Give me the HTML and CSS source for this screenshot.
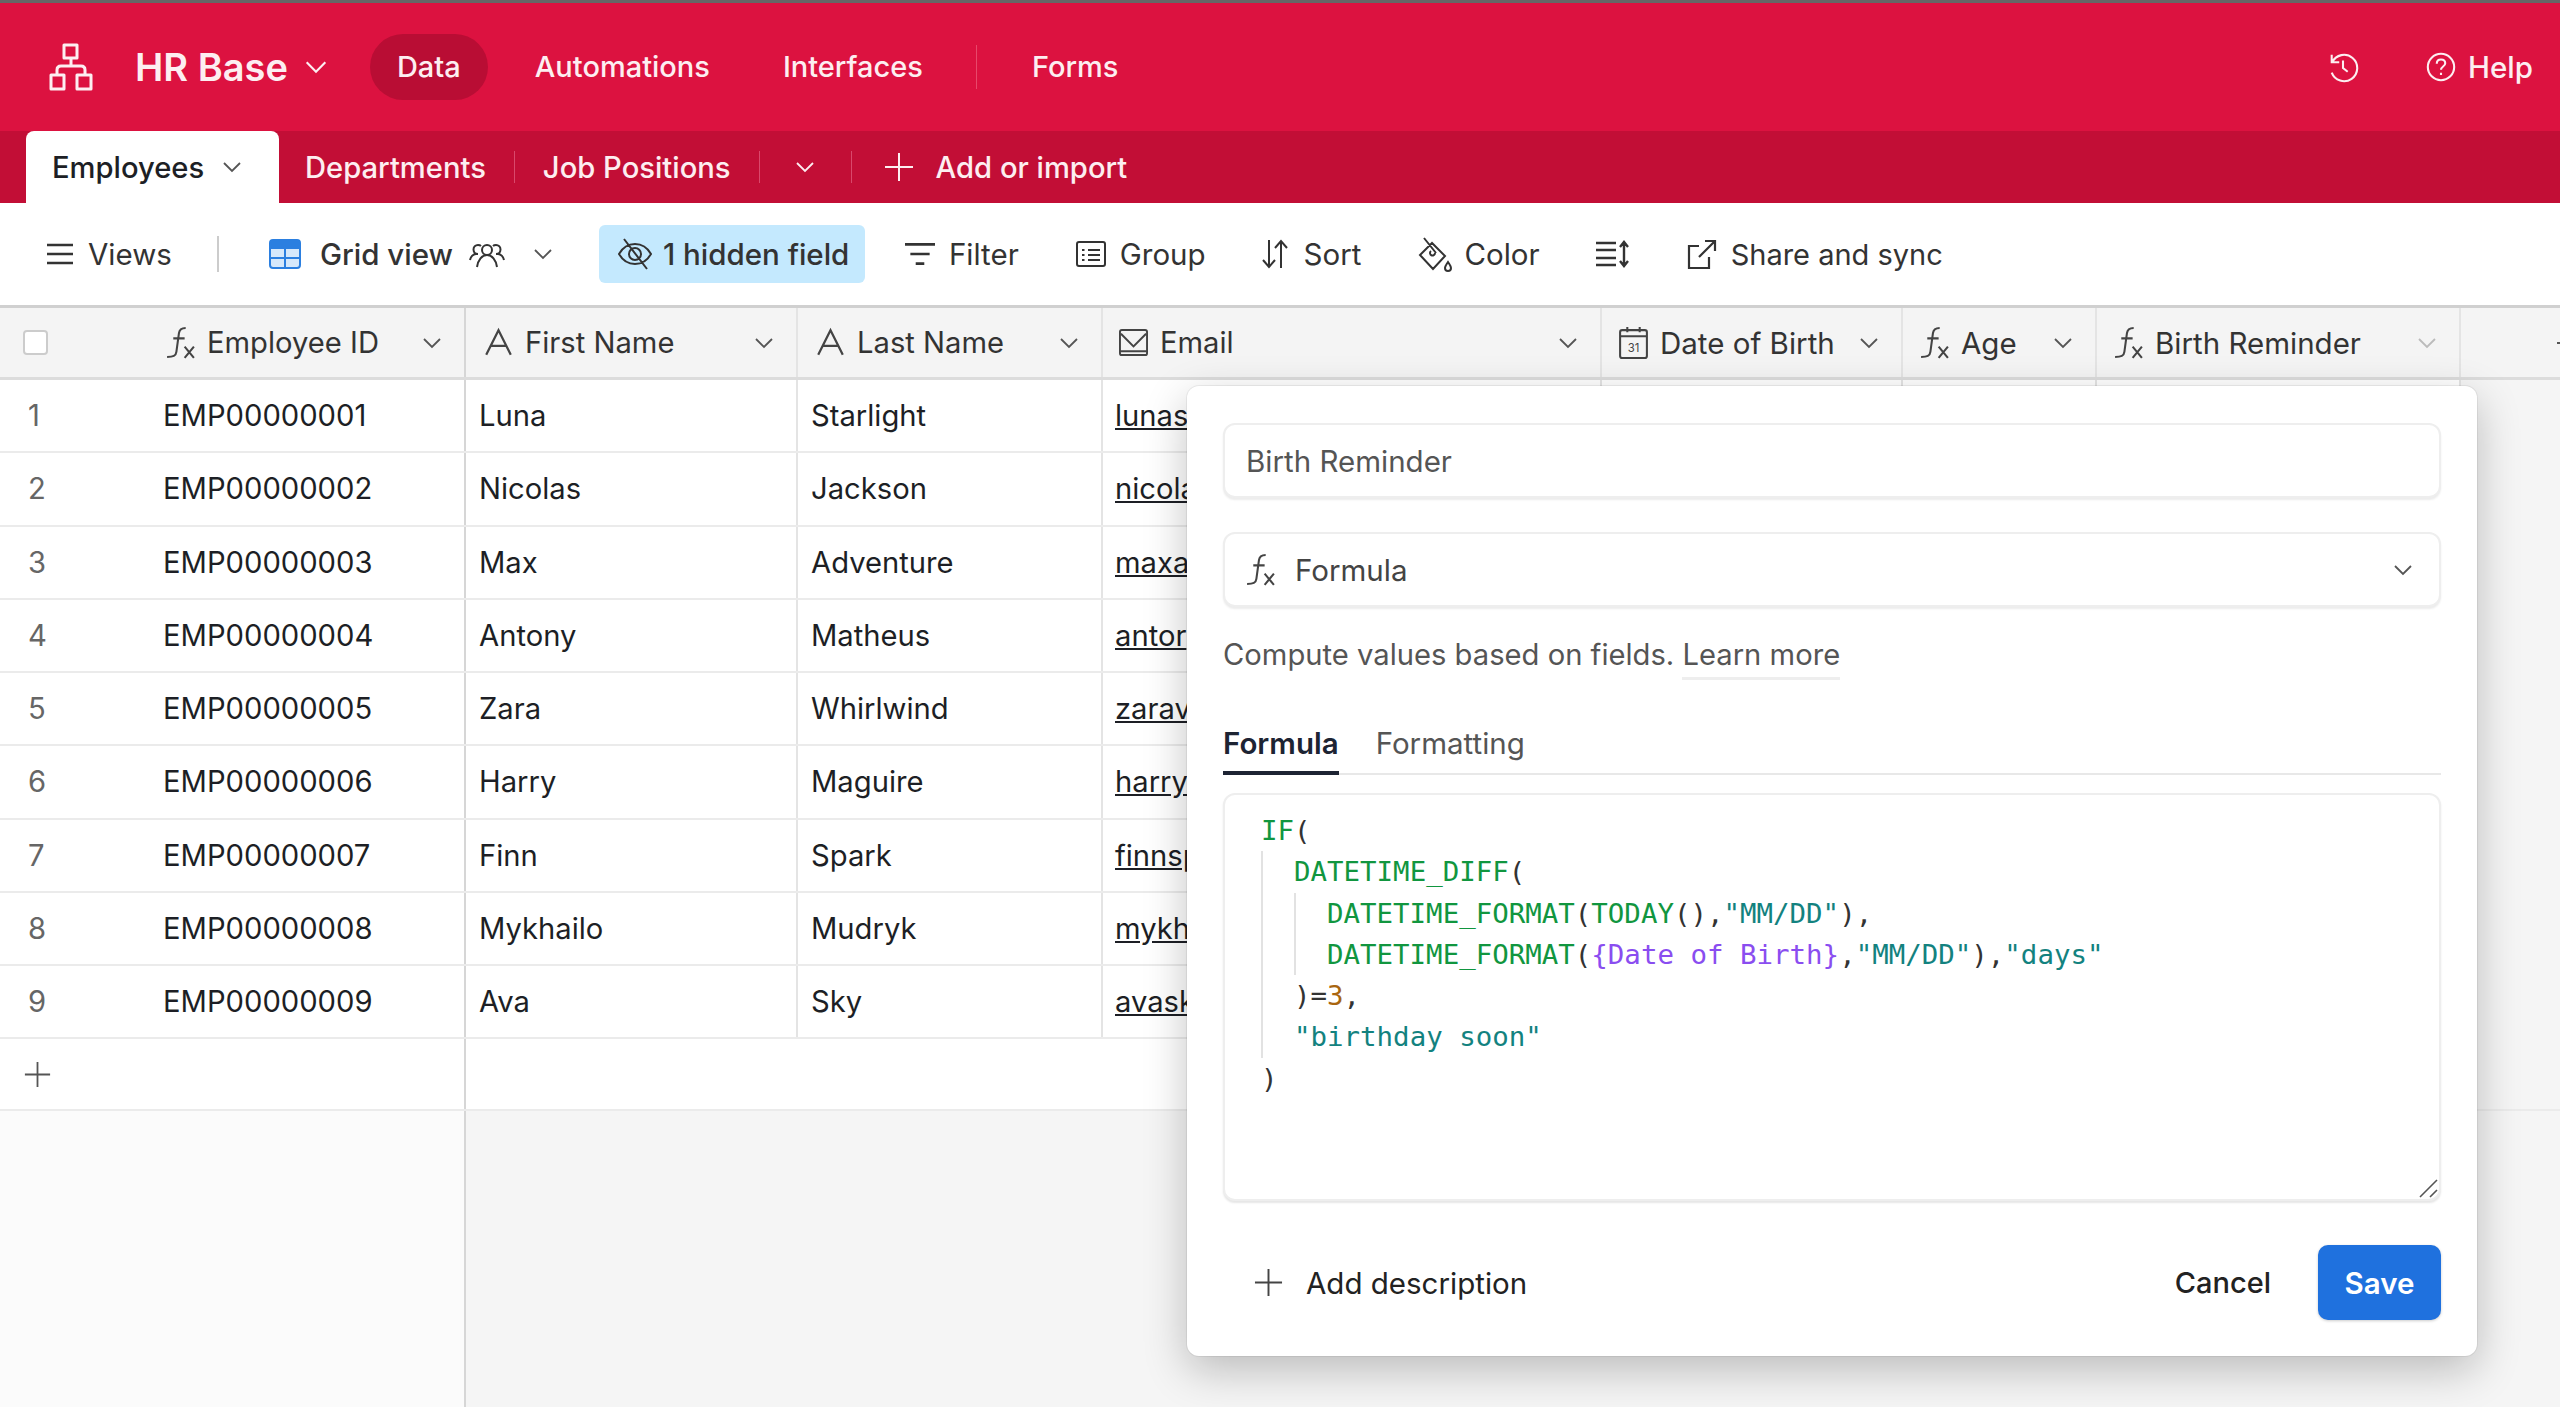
FILE: index.html
```html
<!DOCTYPE html>
<html lang="en">
<head>
    <meta charset="UTF-8">
    <title>HR Base - Employees</title>
    <link rel="stylesheet" href="styles.css">
</head>
<body>
    <svg class="sprites" width="0" height="0">
        <symbol id="chev" viewBox="0 0 20 12"><path d="M2 2l8 8 8-8" fill="none" stroke="currentColor" stroke-width="1.8"/></symbol>
        <symbol id="fx" viewBox="0 0 28 32"><path d="M19 2c-4 0-6 1-6.500 5L10 25c-.5 4-3 5-9 5M7 12h11M18 20l9 11M27 20l-9 11" fill="none" stroke="currentColor" stroke-width="2"/></symbol>
        <symbol id="txt" viewBox="0 0 26 26"><path d="M2 24L13 2l11 22M6.500 16h13" fill="none" stroke="currentColor" stroke-width="2"/></symbol>
        <symbol id="plus" viewBox="0 0 30 30"><path d="M15 1v28M1 15h28" fill="none" stroke="currentColor" stroke-width="2"/></symbol>
    </svg>

    <header class="topbar">
        <svg class="logo" viewBox="0 0 44 48"><path d="M15 2h13v13H15zM2 32h13v14H2zM28 32h14v14H28zM22 15v8M8 32v-5q0-4 4-4h20q4 0 4 4v5" fill="none" stroke="currentColor" stroke-width="3" stroke-linejoin="round"/></svg>
        <span class="base-name">HR Base</span>
        <svg class="chev base-chev"><use href="#chev"/></svg>
        <nav class="nav">
            <a class="nav-item active">Data</a>
            <a class="nav-item">Automations</a>
            <a class="nav-item">Interfaces</a>
            <span class="nav-sep"></span>
            <a class="nav-item">Forms</a>
        </nav>
        <div class="top-right">
            <svg class="top-icon" viewBox="0 0 34 34"><path d="M5 4v8h8M5.500 12A14 14 0 1 1 5 23M17 10v8l5 4" fill="none" stroke="currentColor" stroke-width="2.200"/></svg>
            <span class="help">
                <svg class="top-icon" viewBox="0 0 34 34"><circle cx="17" cy="17" r="14" fill="none" stroke="currentColor" stroke-width="2.200"/><path d="M12.500 13.500c0-3 2-4.500 4.500-4.500s4.500 1.500 4.500 4c0 3.500-4.500 3.500-4.500 7M17 23v2.500" fill="none" stroke="currentColor" stroke-width="2.200"/></svg>
                Help
            </span>
        </div>
    </header>

    <div class="tabbar">
        <div class="tab current">Employees <svg class="chev"><use href="#chev"/></svg></div>
        <div class="tab first">Departments</div>
        <span class="tab-sep"></span>
        <div class="tab">Job Positions</div>
        <span class="tab-sep"></span>
        <svg class="chev tab-more"><use href="#chev"/></svg>
        <span class="tab-sep"></span>
        <div class="tab add"><svg class="tab-plus"><use href="#plus"/></svg>Add or import</div>
    </div>

    <div class="toolbar">
        <div class="tool views">
            <svg class="ticon w28" viewBox="0 0 28 24"><path d="M1 3h26M1 12h26M1 21h26" fill="none" stroke="currentColor" stroke-width="2.400"/></svg>
            Views
        </div>
        <span class="tool-sep"></span>
        <div class="tool gridview">
            <svg class="ticon w32" viewBox="0 0 32 30"><rect x="1" y="1" width="30" height="28" rx="3" fill="#d6e8fb" stroke="#2b7fe0" stroke-width="2"/><path d="M1 4q0-3 3-3h24q3 0 3 3v6H1z" fill="#2b7fe0"/><path d="M1 19h30M16 9v20" stroke="#2b7fe0" stroke-width="2"/></svg>
            <b class="medium">Grid view</b>
            <svg class="ticon people" viewBox="0 0 36 28"><path d="M18 15a5 5 0 1 0 0-10 5 5 0 0 0 0 10zM8 27c1-7 5-12 10-12s9 5 10 12M9 14a4.500 4.500 0 0 1 0-9c1.500 0 2.500 .5 3 1M1 20c.5-3 3-6 6-6M27 14a4.500 4.500 0 0 0 0-9c-1.500 0-2.500 .5-3 1M35 20c-.5-3-3-6-6-6" fill="none" stroke="currentColor" stroke-width="2"/></svg>
            <svg class="chev"><use href="#chev"/></svg>
        </div>
        <div class="tool hidden-field">
            <svg class="ticon eye" viewBox="0 0 36 34"><path d="M2 17c4-7 9-10 16-10s12 3 16 10c-4 7-9 10-16 10S6 24 2 17zM18 11a6 6 0 1 0 0 12 6 6 0 0 0 0-12zM7 2l23 30" fill="none" stroke="currentColor" stroke-width="2"/></svg>
            1 hidden field
        </div>
        <div class="tool filter">
            <svg class="ticon w30" viewBox="1 0 28 24"><path d="M1 3h28M6 12h18M11 21h8" fill="none" stroke="currentColor" stroke-width="2.400"/></svg>
            Filter
        </div>
        <div class="tool group">
            <svg class="ticon w30" viewBox="0 0 30 26"><rect x="1" y="1" width="28" height="24" rx="2" fill="none" stroke="currentColor" stroke-width="2"/><path d="M6 9h2.500M12 9h12M6 14h2.500M12 14h12M6 19h2.500M12 19h12" stroke="currentColor" stroke-width="2"/></svg>
            Group
        </div>
        <div class="tool sort">
            <svg class="ticon w28" viewBox="0 0 28 30"><path d="M8 1v27M2 21l6 7 6-7M20 29V2M14 9l6-7 6 7" fill="none" stroke="currentColor" stroke-width="2"/></svg>
            Sort
        </div>
        <div class="tool color">
            <svg class="ticon bucket" viewBox="0 0 34 36"><path d="M14 7L2 19l13 14 12-13zM6 2l12 15M17 17a2.500 2.500 0 1 1-4-2M30 26c2 3 3 4 3 6a3 3 0 0 1-6 0c0-2 1-3 3-6z" fill="none" stroke="currentColor" stroke-width="2"/></svg>
            Color
        </div>
        <div class="tool rowheight">
            <svg class="ticon w34" viewBox="0 0 34 28"><path d="M1 3h20M1 10h20M1 18h20M1 25h20M29 3v22M25 7l4-5 4 5M25 21l4 5 4-5" fill="none" stroke="currentColor" stroke-width="2.400"/></svg>
        </div>
        <div class="tool share">
            <svg class="ticon w30" viewBox="0 0 30 30"><path d="M12 7H2v22h20V18M12 18L28 2M18 2h10v10" fill="none" stroke="currentColor" stroke-width="2.200"/></svg>
            Share and sync
        </div>
    </div>

    <main class="grid">
        <div class="row head">
            <div class="cell first">
                <span class="checkbox"></span>
                <svg class="field-icon"><use href="#fx"/></svg>
                <span class="field-name">Employee ID</span>
                <svg class="chev"><use href="#chev"/></svg>
            </div>
            <div class="cell"><svg class="field-icon"><use href="#txt"/></svg><span class="field-name">First Name</span><svg class="chev"><use href="#chev"/></svg></div>
            <div class="cell"><svg class="field-icon"><use href="#txt"/></svg><span class="field-name">Last Name</span><svg class="chev"><use href="#chev"/></svg></div>
            <div class="cell">
                <svg class="field-icon" viewBox="0 0 30 28"><rect x="1" y="1" width="28" height="26" rx="2" fill="none" stroke="currentColor" stroke-width="2"/><path d="M2 5l13 13L28 5M1 23h28" fill="none" stroke="currentColor" stroke-width="2"/></svg>
                <span class="field-name">Email</span><svg class="chev"><use href="#chev"/></svg>
            </div>
            <div class="cell">
                <svg class="field-icon" viewBox="0 0 28 32"><rect x="1" y="4" width="26" height="27" rx="2" fill="none" stroke="currentColor" stroke-width="2"/><path d="M1 10h26M8 1v5M20 1v5" fill="none" stroke="currentColor" stroke-width="2"/><text x="14" y="25" class="cal-day">31</text></svg>
                <span class="field-name">Date of Birth</span><svg class="chev"><use href="#chev"/></svg>
            </div>
            <div class="cell"><svg class="field-icon"><use href="#fx"/></svg><span class="field-name">Age</span><svg class="chev"><use href="#chev"/></svg></div>
            <div class="cell"><svg class="field-icon"><use href="#fx"/></svg><span class="field-name">Birth Reminder</span><svg class="chev faded"><use href="#chev"/></svg></div>
            <div class="cell add-field"><svg class="add-plus"><use href="#plus"/></svg></div>
        </div>

        <div class="row"><div class="cell first"><span class="num">1</span>EMP00000001</div><div class="cell">Luna</div><div class="cell">Starlight</div><div class="cell"><u>lunas</u></div><div class="cell"></div><div class="cell"></div><div class="cell"></div></div>
        <div class="row"><div class="cell first"><span class="num">2</span>EMP00000002</div><div class="cell">Nicolas</div><div class="cell">Jackson</div><div class="cell"><u>nicola</u></div><div class="cell"></div><div class="cell"></div><div class="cell"></div></div>
        <div class="row"><div class="cell first"><span class="num">3</span>EMP00000003</div><div class="cell">Max</div><div class="cell">Adventure</div><div class="cell"><u>maxa</u></div><div class="cell"></div><div class="cell"></div><div class="cell"></div></div>
        <div class="row"><div class="cell first"><span class="num">4</span>EMP00000004</div><div class="cell">Antony</div><div class="cell">Matheus</div><div class="cell"><u>antor</u></div><div class="cell"></div><div class="cell"></div><div class="cell"></div></div>
        <div class="row"><div class="cell first"><span class="num">5</span>EMP00000005</div><div class="cell">Zara</div><div class="cell">Whirlwind</div><div class="cell"><u>zarav</u></div><div class="cell"></div><div class="cell"></div><div class="cell"></div></div>
        <div class="row"><div class="cell first"><span class="num">6</span>EMP00000006</div><div class="cell">Harry</div><div class="cell">Maguire</div><div class="cell"><u>harry</u></div><div class="cell"></div><div class="cell"></div><div class="cell"></div></div>
        <div class="row"><div class="cell first"><span class="num">7</span>EMP00000007</div><div class="cell">Finn</div><div class="cell">Spark</div><div class="cell"><u>finnsp</u></div><div class="cell"></div><div class="cell"></div><div class="cell"></div></div>
        <div class="row"><div class="cell first"><span class="num">8</span>EMP00000008</div><div class="cell">Mykhailo</div><div class="cell">Mudryk</div><div class="cell"><u>mykh</u></div><div class="cell"></div><div class="cell"></div><div class="cell"></div></div>
        <div class="row"><div class="cell first"><span class="num">9</span>EMP00000009</div><div class="cell">Ava</div><div class="cell">Sky</div><div class="cell"><u>avask</u></div><div class="cell"></div><div class="cell"></div><div class="cell"></div></div>

        <div class="add-row">
            <div class="add-cell"><svg class="row-plus"><use href="#plus"/></svg></div>
            <div class="add-rest"></div>
        </div>
        <div class="grid-foot">
            <div class="foot-left"></div>
        </div>

        <section class="modal">
            <div class="input">Birth Reminder</div>
            <div class="input select">
                <svg class="field-icon"><use href="#fx"/></svg>
                <span class="select-label">Formula</span>
                <svg class="chev"><use href="#chev"/></svg>
            </div>
            <p class="desc">Compute values based on fields. <a class="learn">Learn more</a></p>
            <div class="modal-tabs">
                <span class="mtab on">Formula</span>
                <span class="mtab">Formatting</span>
            </div>
            <div class="editor">
                <div class="code-line"><i class="fn">IF</i>(</div>
                <div class="indent">
                    <div class="code-line"><i class="fn">DATETIME_DIFF</i>(</div>
                    <div class="indent">
                        <div class="code-line"><i class="fn">DATETIME_FORMAT</i>(<i class="fn">TODAY</i>(),<i class="str">"MM/DD"</i>),</div>
                        <div class="code-line"><i class="fn">DATETIME_FORMAT</i>(<i class="ref">{Date of Birth}</i>,<i class="str">"MM/DD"</i>),<i class="str">"days"</i></div>
                    </div>
                    <div class="code-line">)=<i class="numb">3</i>,</div>
                    <div class="code-line"><i class="str">"birthday soon"</i></div>
                </div>
                <div class="code-line">)</div>
                <svg class="resizer" viewBox="0 0 20 20"><path d="M2 19L19 2M12 19l7-7" fill="none" stroke="#555" stroke-width="1.600"/></svg>
            </div>
            <div class="modal-foot">
                <div class="add-desc"><svg class="desc-plus"><use href="#plus"/></svg>Add description</div>
                <span class="cancel">Cancel</span>
                <button class="save">Save</button>
            </div>
        </section>
    </main>
</body>
</html>
```

FILE: styles.css
```css
* {
    box-sizing: border-box;
}

html, body {
    height: 100%;
}

body {
    margin: 0;
    display: flex;
    flex-direction: column;
    overflow: hidden;
    font-family: Inter, "Noto Sans", sans-serif;
    font-size: 30px;
    color: #1d1f25;
    background: #f5f5f5;
    border-top: 3px solid #666;
}

.sprites {
    position: absolute;
}

.chev {
    width: 20px;
    height: 12px;
    flex: none;
    color: #555;
}

/* top red bar */
.topbar {
    height: 128px;
    flex: none;
    display: flex;
    align-items: center;
    padding-left: 49px;
    background: #dc1240;
    color: #fdeef1;
}

.logo {
    width: 44px;
    height: 48px;
}

.base-name {
    margin-left: 42px;
    font-size: 38px;
    font-weight: 600;
}

.base-chev {
    width: 24px;
    height: 14px;
    margin-left: 16px;
    color: #fdeef1;
}

.nav {
    display: flex;
    align-items: center;
    margin-left: 42px;
}

.nav-item {
    height: 66px;
    line-height: 66px;
    padding: 0 27px;
    margin-right: 19px;
    border-radius: 33px;
    font-weight: 500;
    font-size: 29px;
}

.nav-item.active {
    background: #b90d34;
    margin-right: 20px;
}

.nav-sep {
    width: 1px;
    height: 44px;
    margin: 0 28px 0 7px;
    background: #e8486b;
}

.top-right {
    margin-left: auto;
    margin-right: 27px;
    display: flex;
    align-items: center;
    gap: 66px;
}

.top-icon {
    width: 32px;
    height: 32px;
}

.help {
    display: flex;
    align-items: center;
    gap: 11px;
    font-weight: 500;
    font-size: 29.500px;
}

/* table tabs */
.tabbar {
    height: 72px;
    flex: none;
    display: flex;
    align-items: center;
    padding-left: 26px;
    background: #c20e36;
    color: #fdeef1;
    font-weight: 500;
    font-size: 29.200px;
}

.tab {
    display: flex;
    align-items: center;
}

.tab.current {
    align-self: flex-end;
    width: 253px;
    height: 72px;
    padding-left: 26px;
    gap: 18px;
    background: #fff;
    color: #1d1f25;
    border-radius: 8px 8px 0 0;
}

.tab.first {
    margin-left: 26px;
}

.tab-sep {
    width: 1px;
    height: 32px;
    margin: 0 28px;
    background: #d9486b;
}

.tab-more {
    margin: 0 8px 0 7px;
    color: #fdeef1;
}

.tab.add {
    gap: 22px;
    margin-left: 4px;
}

.tab-plus {
    width: 30px;
    height: 30px;
}

/* view toolbar */
.toolbar {
    height: 102px;
    flex: none;
    display: flex;
    align-items: center;
    padding-left: 46px;
    background: #fff;
    color: #333;
    font-size: 29.500px;
}

.tool {
    display: flex;
    align-items: center;
    gap: 14px;
    white-space: nowrap;
}

.ticon {
    flex: none;
    height: 30px;
}

.w28 { width: 28px; }
.w30 { width: 30px; }
.w32 { width: 32px; }
.w34 { width: 34px; }

.tool-sep {
    width: 2px;
    height: 36px;
    margin: 0 50px 0 45px;
    background: #ccc;
}

.medium {
    font-weight: 500;
}

.gridview {
    gap: 19px;
}

.gridview .chev {
    margin-left: 9px;
}

.people {
    width: 36px;
    height: 28px;
    margin-left: -3px;
}

.hidden-field {
    height: 58px;
    width: 266px;
    margin-left: 46px;
    padding-left: 18px;
    gap: 10px;
    border-radius: 6px;
    background: #c4e9fe;
    font-weight: 500;
}

.eye {
    width: 36px;
    height: 34px;
}

.bucket {
    width: 34px;
    height: 36px;
}

.filter { margin-left: 40px; }
.group { margin-left: 57px; }
.sort { margin-left: 55px; gap: 15px; }
.color { margin-left: 57px; gap: 12px; }
.rowheight { margin-left: 55px; }
.share { margin-left: 58px; font-size: 29px; }

/* grid */
.grid {
    flex: 1;
    position: relative;
    display: flex;
    flex-direction: column;
    border-top: 3px solid #d0d0d0;
}

.row {
    display: grid;
    grid-template-columns: 466px 332px 305px 499px 301px 194px 364px 1fr;
    width: 2461px;
    height: 73.250px;
    flex: none;
    border-bottom: 2px solid #ebebeb;
    background: #fff;
}

.cell {
    display: flex;
    align-items: center;
    padding-left: 15px;
    border-right: 2px solid #e4e4e4;
    white-space: nowrap;
    font-size: 29.200px;
    overflow: hidden;
}

.cell.first {
    padding-left: 0;
    border-right-color: #d6d6d6;
}

.row .cell:nth-child(n+2) {
    padding-left: 13px;
}

.row .cell:nth-child(4) {
    padding-left: 12px;
}

.num {
    width: 163px;
    padding-left: 28px;
    color: #666;
}

.head {
    width: 100%;
    height: 72px;
    background: #f4f4f4;
    border-bottom: 3px solid #dcdcdc;
    color: #333;
}

.head .cell {
    padding-right: 22px;
}

.head .cell:nth-child(n+2) {
    padding-left: 18px;
}

.head .cell:nth-child(n+4) {
    padding-left: 16px;
}

.head .cell:nth-child(n+5) {
    padding-left: 17px;
    font-size: 29.500px;
}

.head .cell.first {
    padding-left: 23px;
    padding-right: 22px;
}

.checkbox {
    width: 25px;
    height: 25px;
    margin-right: 118px;
    flex: none;
    border: 2px solid #ccc;
    border-radius: 4px;
    background: #fff;
}

.field-icon {
    width: 29px;
    height: 33px;
    flex: none;
    color: #444;
    margin-right: 12px;
}

.field-name {
    flex: 1;
    font-weight: 400;
}

.faded {
    color: #bbb;
}

.cal-day {
    font-size: 11px;
    text-anchor: middle;
    fill: currentColor;
}

.add-field {
    border-right: 0;
    overflow: visible;
}

.add-plus {
    width: 30px;
    height: 30px;
    margin-left: 78px;
    color: #555;
    flex: none;
}

.add-row {
    height: 72px;
    flex: none;
    display: flex;
    border-bottom: 2px solid #ebebeb;
}

.add-cell {
    width: 466px;
    display: flex;
    align-items: center;
    padding-left: 24px;
    background: #fff;
    border-right: 2px solid #d6d6d6;
}

.add-rest {
    width: 1995px;
    background: #fff;
}

.row-plus {
    width: 27px;
    height: 27px;
    color: #555;
}

.grid-foot {
    flex: 1;
}

.foot-left {
    width: 466px;
    height: 100%;
    background: #fbfbfb;
    border-right: 2px solid #d6d6d6;
}

/* field editor popover */
.modal {
    position: absolute;
    left: 1187px;
    top: 78px;
    width: 1290px;
    height: 970px;
    padding: 37px 36px 0;
    display: flex;
    flex-direction: column;
    background: #fff;
    border-radius: 12px;
    box-shadow: 0 0 0 1px rgba(0, 0, 0, .06), 0 14px 44px rgba(0, 0, 0, .24);
}

.input {
    height: 75px;
    flex: none;
    display: flex;
    align-items: center;
    padding-left: 21px;
    background: #fff;
    border: 2px solid #eee;
    border-radius: 12px;
    box-shadow: 0 2px 2px rgba(0, 0, 0, .08);
    color: #555;
    font-size: 29.500px;
}

.select {
    margin-top: 34px;
    color: #444;
}

.select .field-icon {
    margin-right: 20px;
}

.select-label {
    flex: 1;
}

.select .chev {
    margin-right: 26px;
}

.desc {
    margin: 30px 0 0;
    line-height: 36px;
    color: #555;
    font-size: 29.200px;
}

.learn {
    display: inline-block;
    padding-bottom: 4px;
    border-bottom: 3px solid #eee;
}

.modal-tabs {
    display: flex;
    gap: 37px;
    margin-top: 45px;
    height: 50px;
    flex: none;
    border-bottom: 2px solid #e8e8e8;
    font-size: 29.500px;
    color: #555;
}

.mtab.on {
    color: #1d2433;
    font-weight: 600;
    height: 50px;
    border-bottom: 4px solid #1d2433;
}

.editor {
    position: relative;
    height: 408px;
    flex: none;
    margin-top: 18px;
    padding: 15px 0 0 36px;
    background: #fff;
    border: 2px solid #eee;
    border-radius: 12px;
    box-shadow: 0 2px 2px rgba(0, 0, 0, .1);
    font-family: "DejaVu Sans Mono", monospace;
    font-size: 27.450px;
    color: #333;
}

.code-line {
    height: 41.250px;
    line-height: 41.250px;
    white-space: pre;
}

.code-line i {
    font-style: normal;
}

.indent {
    padding-left: 33px;
    box-shadow: inset 2px 0 0 #e2e2e2;
}

.fn { color: #11963f; }
.str { color: #13827f; }
.ref { color: #8a4df0; }
.numb { color: #a9660f; }

.resizer {
    position: absolute;
    right: 1px;
    bottom: 1px;
    width: 20px;
    height: 20px;
}

.modal-foot {
    display: flex;
    align-items: center;
    margin-top: 44px;
    font-size: 29.500px;
    color: #222;
}

.add-desc {
    flex: 1;
    display: flex;
    align-items: center;
    gap: 23px;
    padding-left: 31px;
}

.desc-plus {
    width: 29px;
    height: 29px;
    color: #444;
}

.cancel {
    margin-right: 47px;
    font-size: 29px;
    font-weight: 500;
}

.save {
    width: 123px;
    height: 75px;
    border: 0;
    border-radius: 10px;
    background: #1f71de;
    color: #fff;
    font: 600 29.500px Inter, sans-serif;
    box-shadow: 0 1px 3px rgba(0, 0, 0, .2);
}
```
